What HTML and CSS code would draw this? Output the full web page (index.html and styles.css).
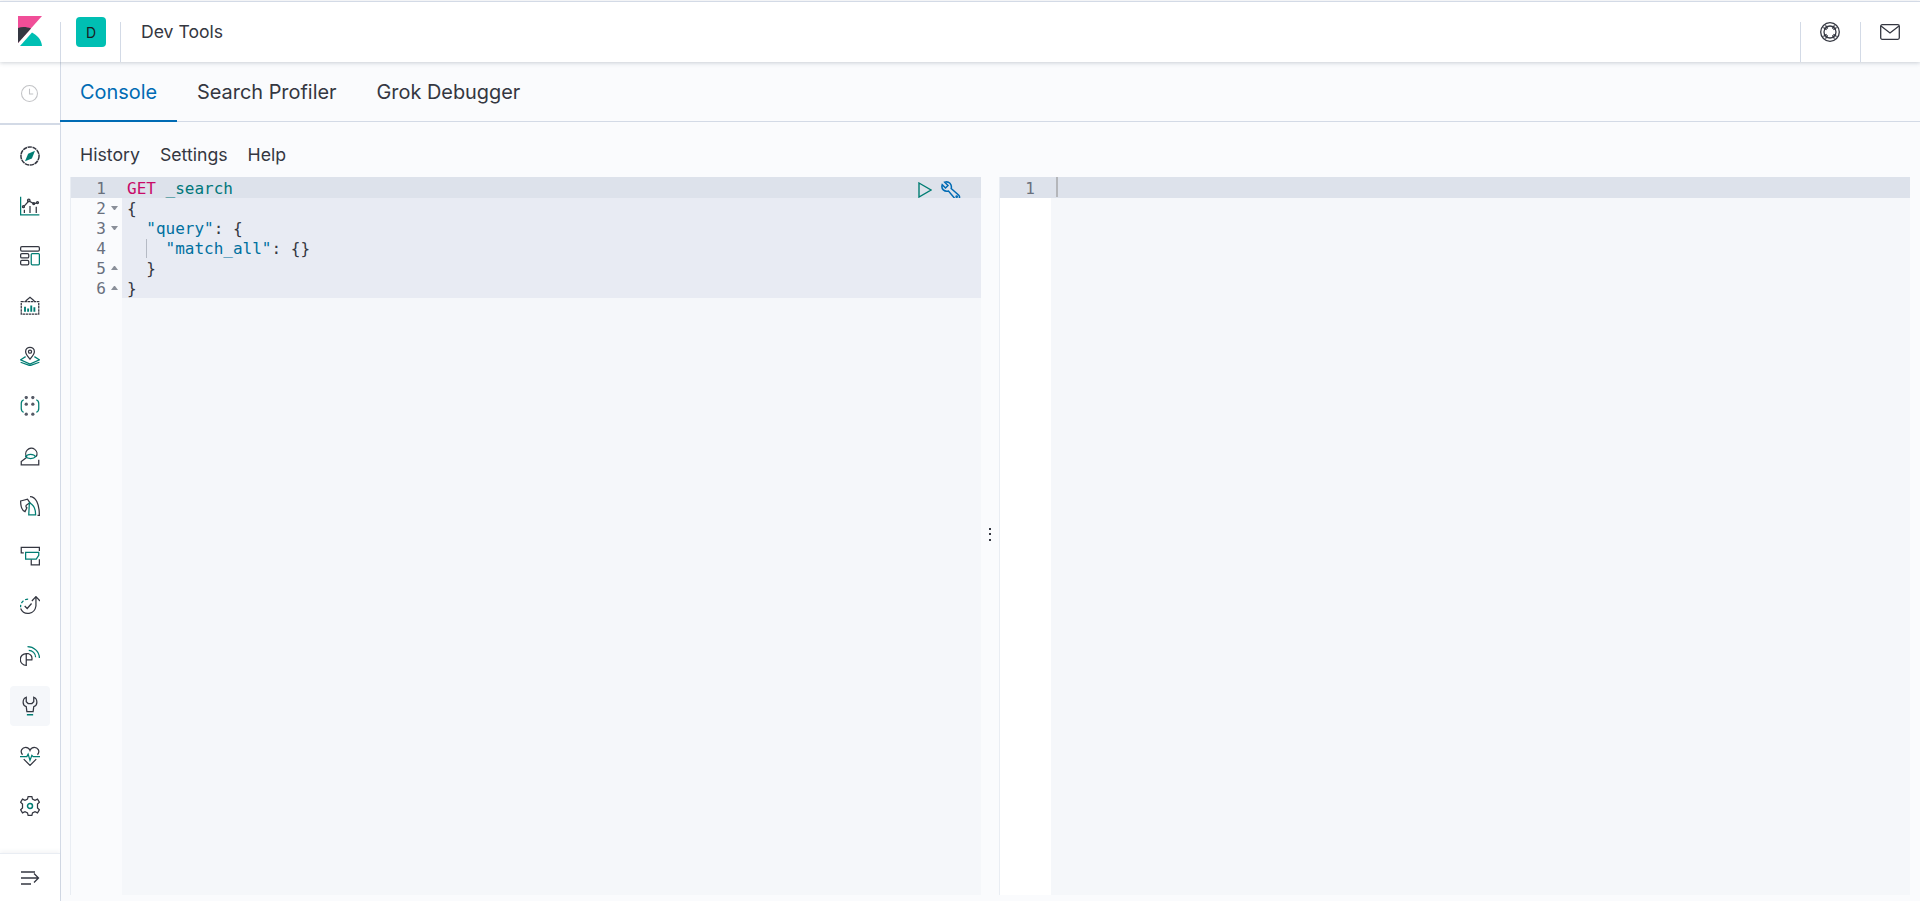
FILE: index.html
```html
<!DOCTYPE html>
<html lang="en">
<head>
<meta charset="utf-8">
<title>Dev Tools - Kibana</title>
<link rel="stylesheet" href="styles.css">
</head>
<body>
<div class="page">
  <header class="header">
    <div class="logo-cell">
      <svg class="logo" viewBox="0 0 24 30" width="24" height="30"><path fill="#f04e98" d="M0 0h24L0 27z"/><path fill="#343741" d="M0 12v15l13-14.400C9 11 4.500 10.500 0 12z"/><path fill="#00bfb3" d="M2 30l12-13.400C19.500 19.500 23.500 24 24 30z"/></svg>
    </div>
    <div class="avatar-cell"><span class="avatar">D</span></div>
    <div class="crumb">Dev Tools</div>
    <div class="hicon">
      <svg viewBox="0 0 20 20" width="20" height="20"><g class="d"><circle cx="10" cy="10" r="9.300"/><circle cx="10" cy="10" r="6"/><path d="M3.400 5.500l3.200 2.100M5.500 3.400l2.100 3.200M16.600 5.500l-3.200 2.100M14.500 3.400l-2.100 3.200M3.400 14.500l3.200-2.100M5.500 16.600l2.100-3.200M16.600 14.500l-3.200-2.100M14.500 16.600l-2.100-3.200"/></g></svg>
    </div>
    <div class="hicon mail">
      <svg viewBox="0 0 20 16" width="20" height="16"><g class="d"><rect x="0.700" y="0.700" width="18.600" height="14.600" rx="1.500"/><path d="M1 2l9 7 9-7"/></g></svg>
    </div>
  </header>
  <div class="body-row">
    <nav class="nav">
      <div class="recent">
        <svg viewBox="0 0 16 16" width="17" height="17"><g class="faint"><circle cx="8" cy="8" r="7.500"/><path d="M8 3.500V8.500h3.500"/></g></svg>
      </div>
      <div class="nav-list">
        <a class="nav-item"><svg viewBox="0 0 32 32"><circle class="d ring" cx="16" cy="16" r="14.500"/><path class="tf" d="M24 7.500L19 20 8 24.500 13 12.500z"/></svg></a>
        <a class="nav-item"><svg viewBox="0 0 32 32"><path class="t" d="M1 1v29h30"/><g class="d"><path d="M6 17l8-9 8 4 6-1"/><circle cx="5.500" cy="17" r="1.600"/><circle cx="14" cy="7" r="2"/><circle cx="22" cy="12" r="1.600"/><circle cx="28" cy="10.500" r="1.600"/><path d="M7 22v5M16 16v11M26 17v10"/></g></svg></a>
        <a class="nav-item"><svg viewBox="0 0 32 32"><g class="d"><rect x="1" y="1" width="30" height="7" rx="2"/><rect x="1" y="12" width="13" height="7" rx="2"/><rect x="1" y="23" width="13" height="7" rx="2"/></g><rect class="t" x="18" y="12" width="13" height="18" rx="1.500"/></svg></a>
        <a class="nav-item"><svg viewBox="0 0 32 32"><g class="d"><path class="frame" d="M2 9h28v20H2z"/><path d="M9 8l7-6 7 6"/></g><path class="t bars" d="M8 17v8M13 20v5M18 15v10M23 18v7"/></svg></a>
        <a class="nav-item"><svg viewBox="0 0 32 32"><g class="d"><path d="M16 21c-4-5-7-8-7-12a7 7 0 0114 0c0 4-3 7-7 12z"/><circle cx="16" cy="9" r="2.500"/></g><path class="t" d="M9 17l-8 5 15 7 15-7-8-5M1 26l15 5.500L31 26"/></svg></a>
        <a class="nav-item"><svg viewBox="0 0 32 32"><g class="dots"><circle cx="10" cy="2.500" r="2.600"/><circle cx="20.500" cy="2.500" r="2.600"/><circle cx="10" cy="13" r="2.600"/><circle cx="20.500" cy="13" r="2.600"/><circle cx="10" cy="29" r="2.600"/><circle cx="20.500" cy="29" r="2.600"/></g><path class="t" d="M6 6C3 7 2 9 2 12v8c0 3 1 5 4 6M26 6c3 1 4 3 4 6v8c0 3-1 5-4 6"/></svg></a>
        <a class="nav-item"><svg viewBox="0 0 32 32"><g class="d"><path d="M11 18a9 9 0 1115-1M11 18L2 25v5h28v-8"/></g><path class="t" d="M9 17c3-5 13-5 16 0-3 4-13 4-16 0z"/></svg></a>
        <a class="nav-item"><svg viewBox="0 0 32 32"><g class="d"><path d="M16 1c9 0 15 11 15 30h-3M1 8l11-3 4 6-5 3c-2 1-2 4 0 5l-3 6C3 23 1 16 1 8z"/></g><path class="t" d="M15 11c7 3 10 11 10 19H14z"/></svg></a>
        <a class="nav-item"><svg viewBox="0 0 32 32"><g class="d"><path d="M6 11H2V2h29v6M18 21v9h13v-9"/></g><path class="t" d="M9 10h21v5l-4 6H9z"/></svg></a>
        <a class="nav-item"><svg viewBox="0 0 32 32"><g class="d"><path d="M25.500 2v14A13 14 0 011 20M19 8l6.500-7L32 8M7.500 16l4 4 7-8"/></g><path class="t arc" d="M13 5A12 12 0 001 18"/></svg></a>
        <a class="nav-item"><svg viewBox="0 0 32 32"><g class="d"><path d="M10 12a9.500 9.500 0 100 19V12zM10 12h3a9 9 0 016 10h-9"/></g><path class="t" d="M12 1c10 0 19 8 19 18M14 7c6 0 11 5 11 11"/></svg></a>
        <a class="nav-item active"><svg viewBox="0 0 32 32"><path class="d" d="M10 2C6 3.500 5 7 5 10c0 3 2 6 5 7l1 8h10l1-8c3-1 5-4 5-7 0-3-1-6.500-5-8v7l-3 3h-6l-3-3z"/><path class="t thick" d="M11 30h10"/></svg></a>
        <a class="nav-item"><svg viewBox="0 0 32 32"><path class="d" d="M4 14C-1 8 4 2 9 2c3 0 6 2 7 5 1-3 4-5 7-5 5 0 10 6 5 12M6 21l10 10 10-10"/><path class="t" d="M0 17h11l2-4 3 10 3-8 2 2h11"/></svg></a>
        <a class="nav-item"><svg viewBox="0 0 32 32"><path class="d" d="M13 1h6l1 4 4 2 4-2 3 5-3 3v6l3 3-3 5-4-2-4 2-1 4h-6l-1-4-4-2-4 2-3-5 3-3v-6L1 10l3-5 4 2 4-2z"/><circle class="t thick" cx="16" cy="16" r="4"/></svg></a>
      </div>
      <div class="collapse">
        <svg viewBox="0 0 20 14" width="20" height="14"><g class="d"><path d="M1 1h14M1 7h17M1 13h10M14 2.500L18.500 7 14 11.500"/></g></svg>
      </div>
    </nav>
    <main class="main">
      <div class="tabs">
        <a class="tab selected">Console</a>
        <a class="tab">Search Profiler</a>
        <a class="tab">Grok Debugger</a>
      </div>
      <div class="menu">
        <a>History</a><a>Settings</a><a>Help</a>
      </div>
      <div class="editors">
        <section class="pane left">
          <div class="gutter">
            <div class="gl on">1<i></i></div>
            <div class="gl">2<i class="down"></i></div>
            <div class="gl">3<i class="down"></i></div>
            <div class="gl">4<i></i></div>
            <div class="gl">5<i class="up"></i></div>
            <div class="gl">6<i class="up"></i></div>
          </div>
          <div class="code">
            <div class="line on"><span class="kw">GET</span> <span class="url">_search</span><span class="actions"><svg class="play-icon" viewBox="0 0 14 16" width="14" height="16"><path class="play" d="M1 1l12 7-12 7z"/></svg><svg viewBox="0 0 20 20" width="20" height="20"><g class="wrench"><path d="M3.700 1.200L7 4.500 4.500 7 1.200 3.700C-.200 8 3.500 11.200 7.500 10L14 17.800c2.500 2.200 6-.800 3.800-3.500L10.200 7.500C11.200 3.500 8-.200 3.700 1.200z"/><circle cx="15.700" cy="15.700" r=".6"/></g></svg></span></div>
            <div class="line sel">{</div>
            <div class="line sel">  <span class="str">"query"</span>: {</div>
            <div class="line sel">  <span class="guide">  </span><span class="str">"match_all"</span>: {}</div>
            <div class="line sel">  }</div>
            <div class="line sel">}</div>
          </div>
        </section>
        <div class="divider"><b></b><b></b><b></b></div>
        <section class="pane right">
          <div class="gutter white">
            <div class="gl on plain">1</div>
          </div>
          <div class="code">
            <div class="line on"><span class="cursor"></span></div>
          </div>
        </section>
      </div>
    </main>
  </div>
</div>
</body>
</html>
```
FILE: styles.css
```css
* { box-sizing: border-box; }
html, body { margin: 0; height: 100%; overflow: hidden; }
body { font-family: Inter, "Noto Sans", sans-serif; color: #343741; background: #fafbfd; }
.page { height: 901px; display: flex; flex-direction: column; padding-top: 1px; background: #fff; }

.header { height: 61px; flex: none; display: flex; background: #fff; border-top: 1px solid #d3dae6; position: relative; z-index: 2; box-shadow: 0 1px 4px rgba(65,78,101,.25); }
.logo-cell { width: 61px; flex: none; display: flex; justify-content: center; padding: 14px 1px 0 0; }
.logo-cell, .avatar-cell, .hicon { position: relative; }
.logo-cell::after, .avatar-cell::after, .hicon::before { content: ""; position: absolute; top: 20px; bottom: 0; width: 1px; background: #d3dae6; }
.logo-cell::after { right: 0; }
.avatar-cell::after { right: 0; }
.hicon::before { left: 0; }
.avatar-cell { width: 60px; padding: 15px 0 0 15px; flex: none; }
.avatar { display: flex; width: 30px; height: 30px; background: #00bfb3; border-radius: 4px; color: #1a1c21; font-size: 14px; align-items: center; justify-content: center; }
.crumb { flex: 1; padding: 20px 0 0 20px; font-size: 17.600px; line-height: 20px; color: #343741; }
.hicon { width: 60px; display: flex; justify-content: center; padding-top: 20px; align-items: flex-start; }
.hicon.mail { padding-top: 22px; }

.d, .d * { fill: none; stroke: #343741; stroke-width: 2; }
.t, .t * { fill: none; stroke: #017d73; stroke-width: 2; }
.tf { fill: #017d73; }
.dots { fill: #555a66; }
.ring { stroke-dasharray: 7 1; stroke-width: 2.400; }
.frame { stroke-dasharray: 4 1; }
.bars { stroke-width: 3; }
.thick { stroke-width: 2.400; }
.arc { stroke-dasharray: 5 3; }
.faint, .faint * { fill: none; stroke: #c2c3c6; stroke-width: 1; }
.hicon .d, .hicon .d * { stroke-width: 1.300; }
.collapse .d * { stroke-width: 1.300; }

.body-row { flex: 1; display: flex; min-height: 0; }
.nav { width: 61px; flex: none; display: flex; flex-direction: column; background: #fff; border-right: 1px solid #d3dae6; }
.recent { height: 63px; flex: none; display: flex; align-items: center; justify-content: center; border-bottom: 2px solid #d3dae6; padding: 1px 2px 0 0; }
.nav-list { flex: 1; display: flex; flex-direction: column; align-items: center; padding-top: 11px; }
.nav-item { width: 40px; height: 40px; flex: none; margin-bottom: 10px; display: flex; align-items: center; justify-content: center; border-radius: 4px; }
.nav-item svg { width: 20px; height: 20px; display: block; }
.nav-item.active { background: #f5f7fa; }
.collapse { height: 48px; flex: none; display: flex; align-items: center; justify-content: center; border-top: 1px solid #e9edf3; box-shadow: 0 -2px 4px rgba(65,78,101,.06); }

.main { flex: 1; min-width: 0; display: flex; flex-direction: column; background: #fafbfd; }
.tabs { height: 60px; flex: none; display: flex; border-bottom: 1px solid #d3dae6; margin-left: -1px; }
.tab { padding: 0 20px; height: 60px; line-height: 60px; font-size: 19.900px; color: #343741; }
.tab.selected { color: #006bb4; border-bottom: 2px solid #006bb4; }
.menu { height: 55px; flex: none; display: flex; gap: 20px; padding: 23px 0 0 19px; font-size: 17.700px; line-height: 20px; }
.editors { flex: 1; min-height: 0; display: flex; padding: 0 10px 6px 9px; }
.pane { flex: 1; min-width: 0; display: flex; background: #f5f7fa; border-left: 1px solid #e9edf3; }
.gutter { width: 51px; flex: none; background: #fafbfd; font: 16px/22px "DejaVu Sans Mono", monospace; color: #69707d; }
.gutter.white { background: #fff; }
.gl { height: 20px; display: flex; justify-content: flex-end; padding-right: 4px; }
.gl:first-child { height: 21px; padding-top: 1px; }
.gl.on { background: #dde2eb; }
.gl.plain { padding-right: 16px; }
.gl i { width: 7px; height: 0; margin: 8px 0 0 5px; border: 3.500px solid transparent; }
.gl i.down { border-top: 4px solid #8a8f99; border-bottom: 0; }
.gl i.up { border-bottom: 4px solid #8a8f99; border-top: 0; }
.code { flex: 1; min-width: 0; font: 16px/22px "DejaVu Sans Mono", monospace; color: #343741; }
.line { height: 20px; padding-left: 5px; position: relative; white-space: pre; }
.line:first-child { height: 21px; padding-top: 1px; }
.line.on { background: #dde2eb; }
.line.sel { background: #e8ebf3; }
.kw { color: #c80a68; }
.url { color: #00777a; }
.str { color: #00709f; }
.guide { box-shadow: inset 1px 0 0 #b5bac4; }
.actions { position: absolute; right: 20px; top: 4px; display: flex; gap: 9px; align-items: flex-start; }
.play-icon { margin-top: 1px; }
.play { fill: none; stroke: #017d73; stroke-width: 1.400; }
.wrench, .wrench * { fill: none; stroke: #006bb4; stroke-width: 1.500; }
.cursor { display: block; width: 2px; height: 20px; background: #b4b6ba; margin-top: -1px; }
.divider { width: 18px; flex: none; display: flex; flex-direction: column; align-items: center; justify-content: center; gap: 3.500px; padding-bottom: 4px; }
.divider b { width: 2px; height: 2px; background: #343741; }
```
